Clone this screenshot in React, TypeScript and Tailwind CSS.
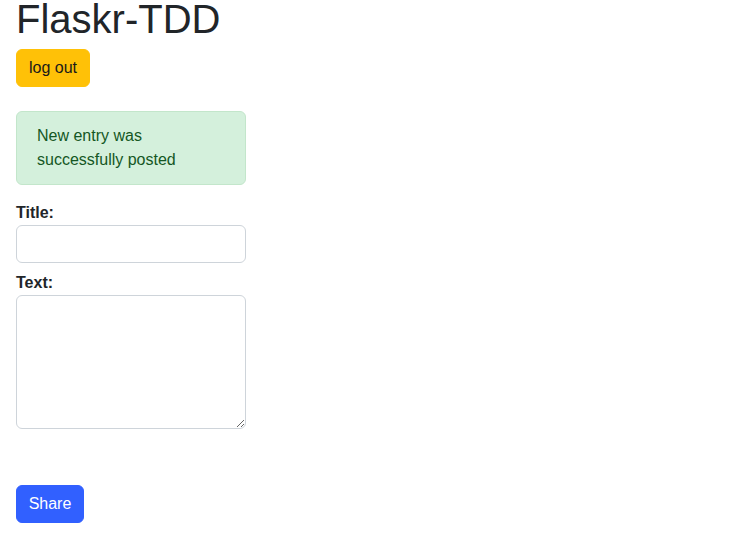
export default function App() {
  return (
    <div
      className="min-h-[550px] bg-white px-4 text-[16px] leading-6 text-[#212529]"
      style={{ fontFamily: "'Liberation Sans', Arial, sans-serif" }}
    >
      <h1 className="mb-[11px] text-[40px] font-normal leading-[38px]">Flaskr-TDD</h1>

      <button className="h-[38px] rounded-[6px] border border-[#ffc107] bg-[#ffc107] px-3 text-[#1a1a1a]">
        log out
      </button>

      <div className="mt-6 w-[230px] rounded-[6px] border border-[#c3e6cb] bg-[#d4f0dc] pb-[12px] pl-5 pr-4 pt-[12px] text-[#155724]">
        New entry was successfully posted
      </div>

      <form className="mt-[16px] flex w-[230px] flex-col" onSubmit={(e) => e.preventDefault()}>
        <label className="font-bold">Title:</label>
        <input
          type="text"
          className="h-[38px] w-[230px] rounded-[6px] border border-[#ced4da] px-3 outline-none"
        />
        <label className="mt-2 font-bold">Text:</label>
        <textarea className="h-[134px] w-[230px] rounded-[6px] border border-[#ced4da] px-3 py-1.5 outline-none" />
        <div className="mt-[56px]">
          <button
            type="submit"
            className="h-[38px] w-[68px] rounded-[6px] border border-[#3160ff] bg-[#3160ff] text-white"
          >
            Share
          </button>
        </div>
      </form>
    </div>
  );
}
